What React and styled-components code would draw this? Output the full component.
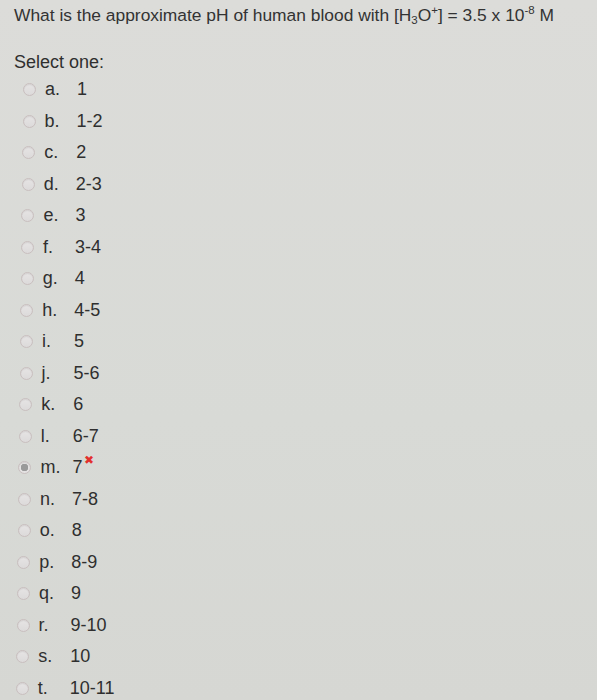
import React from 'react'
import styled, { createGlobalStyle } from 'styled-components'

const options = [
  ['a.', '1'], ['b.', '1-2'], ['c.', '2'], ['d.', '2-3'], ['e.', '3'],
  ['f.', '3-4'], ['g.', '4'], ['h.', '4-5'], ['i.', '5'], ['j.', '5-6'],
  ['k.', '6'], ['l.', '6-7'], ['m.', '7'], ['n.', '7-8'], ['o.', '8'],
  ['p.', '8-9'], ['q.', '9'], ['r.', '9-10'], ['s.', '10'], ['t.', '10-11'],
]

const App = () => {
  return (
    <Page>
      <GlobalStyle />
      <Question>
        What is the approximate pH of human blood with [H<sub>3</sub>O<sup>+</sup>] = 3.5 x 10<sup>-8</sup> M
      </Question>
      <Prompt>Select one:</Prompt>
      <OptionList>
        {options.map(([letter, value], i) => (
          <Option key={letter} $shift={i}>
            <Radio $checked={letter === 'm.'} />
            <Letter>{letter}</Letter>
            <Value>
              {value}
              {letter === 'm.' && <Wrong>✖</Wrong>}
            </Value>
          </Option>
        ))}
      </OptionList>
    </Page>
  )
}

export default App

const GlobalStyle = createGlobalStyle`
body{
  margin:0;
  background:#d9dad6;
  font-family:"Liberation Sans", Arial, sans-serif;
}
`

const Page = styled.div`
width:597px;
height:700px;
overflow:hidden;
background:linear-gradient(180deg,#dcdcd9 0%,#d8dad6 60%,#d6d7d3 100%);
color:#2d2d2d;
`

const Question = styled.div`
padding:3px 0 0 14px;
font-size:17.4px;
line-height:24px;
white-space:nowrap;
color:#333;
sub,sup{
  font-size:11.5px;
  line-height:0;
}
sub{ vertical-align:-3px; }
sup{ vertical-align:7px; }
`

const Prompt = styled.div`
margin-top:24px;
padding-left:14px;
font-size:18px;
line-height:22px;
color:#2f2f2f;
`

const OptionList = styled.div`
margin-top:1px;
display:flex;
flex-direction:column;
`

const Option = styled.div`
display:flex;
align-items:center;
height:31.5px;
padding-left:${p => 23 - p.$shift * 0.38}px;
font-size:18px;
color:#2f2f2f;
`

const Radio = styled.span`
box-sizing:border-box;
width:13px;
height:13px;
border-radius:50%;
border:1px solid #c9bfbf;
background:${p => p.$checked ? 'radial-gradient(circle,#9a9a9a 0 3.5px,#e4e2e2 4px)' : 'linear-gradient(180deg,#e6e4e4,#dcdada)'};
box-shadow:inset 0 1px 1px rgba(0,0,0,0.08);
`

const Letter = styled.span`
width:32px;
margin-left:9px;
`

const Value = styled.span`
position:relative;
`

const Wrong = styled.span`
position:absolute;
left:12px;
top:-4px;
font-size:12px;
color:#e2302d;
`
